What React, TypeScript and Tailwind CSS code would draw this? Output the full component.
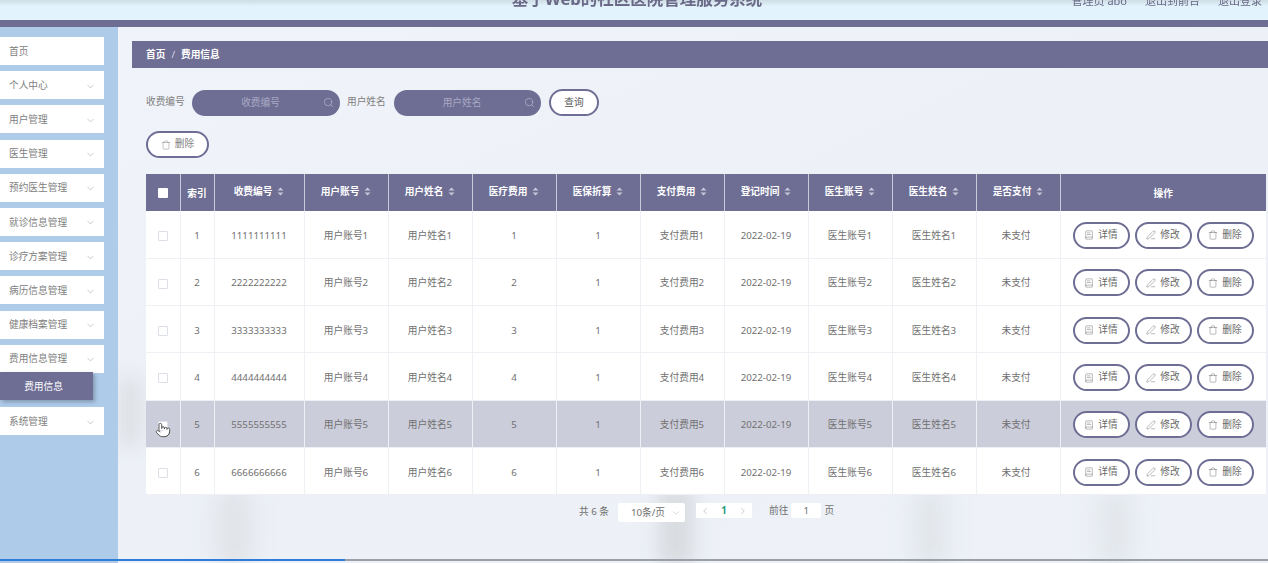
import { ChevronDown, ChevronLeft, ChevronRight, Search, Trash, PenLine, BookText, Pointer } from "lucide-react";

const menu = ["个人中心", "用户管理", "医生管理", "预约医生管理", "就诊信息管理", "诊疗方案管理", "病历信息管理", "健康档案管理", "费用信息管理"];
const heads = ["收费编号", "用户账号", "用户姓名", "医疗费用", "医保折算", "支付费用", "登记时间", "医生账号", "医生姓名", "是否支付"];
const widths = [34, 34, 90, 84, 84, 84, 84, 84, 84, 84, 84, 84, 206];
const rows = [1, 2, 3, 4, 5, 6];

function Sort() {
  return (
    <svg width="7" height="9" viewBox="0 0 7 9" className="inline-block ml-[5px] align-[-1px]">
      <path d="M3.5 0.5L6.5 3.6H0.5Z" fill="#c4c6d8" />
      <path d="M3.5 8.5L6.5 5.4H0.5Z" fill="#c4c6d8" />
    </svg>
  );
}

function Action({ icon, label }: { icon: React.ReactNode; label: string }) {
  return (
    <button className="w-[57px] h-[27px] -mt-[1px] rounded-full border-2 border-[#6e6e95] bg-white flex items-center justify-center gap-[4px] text-[9.7px] text-[#6a6a6a]">
      {icon}
      {label}
    </button>
  );
}

function MenuItem({ label, arrow = true }: { label: string; arrow?: boolean }) {
  return (
    <div className="h-[28px] w-[104px] bg-white flex items-center justify-between pl-[9px] pr-[8px] pt-[2px] text-[9.7px] text-[#808080]">
      <span>{label}</span>
      {arrow && <ChevronDown size={11} strokeWidth={1.1} color="#999" />}
    </div>
  );
}

export default function App() {
  return (
    <div className="relative w-[1268px] h-[563px] overflow-hidden flex flex-col blur-[0.4px] font-['Noto_Sans','Noto_Sans_CJK_SC',sans-serif]">
      <header className="h-[20px] shrink-0 bg-gradient-to-b from-[#cfdde3] via-[#e2f3fd] via-30% to-[#e2f3fd] flex items-start overflow-hidden relative">
        <div className="flex-1 flex justify-center pl-[6px]">
          <span className="text-[16.5px] font-bold text-[#6a6a88] leading-none -mt-[9px]">基于Web的社区医院管理服务系统</span>
        </div>
        <div className="absolute right-[6px] -top-[6px] flex gap-[18px] text-[11px] leading-[14px] text-[#6a6a88]">
          <span>管理员 abo</span>
          <span>退出到前台</span>
          <span>退出登录</span>
        </div>
      </header>
      <div className="h-[7px] shrink-0 bg-[#6e6e95]" />
      <div className="flex-1 flex min-h-0">
        <aside className="w-[118px] shrink-0 bg-[#aecbea] pt-[10px] flex flex-col">
          <div className="flex flex-col gap-[6.2px]">
            <MenuItem label="首页" arrow={false} />
            {menu.map((m) => (
              <MenuItem key={m} label={m} />
            ))}
          </div>
          <div className="h-[28px] w-[93px] bg-[#6e6e95] shadow-[2px_2px_4px_rgba(0,0,0,0.25)] text-[9.7px] text-white flex items-center justify-center pr-[6px] pt-[2px] -mt-[0.5px]">
            费用信息
          </div>
          <div className="mt-[7px]">
            <MenuItem label="系统管理" />
          </div>
        </aside>
        <main className="relative flex-1 min-w-0 pt-[14px] bg-gradient-to-br from-[#f0f3f9] via-[#edf1f7] to-[#eef2f8] overflow-hidden">
          <div className="absolute left-[98px] top-[462px] w-[36px] h-[80px] bg-[#e0e3e7] blur-[12px]" />
          <div className="absolute left-[540px] top-[460px] w-[36px] h-[80px] bg-[#d8dbdf] blur-[10px]" />
          <div className="absolute left-[795px] top-[462px] w-[34px] h-[80px] bg-[#e1e5e9] blur-[12px]" />
          <div className="absolute left-[980px] top-[462px] w-[34px] h-[80px] bg-[#e2e6ea] blur-[12px]" />
          <div className="absolute left-0 top-[350px] w-[24px] h-[70px] bg-[#dcdfe3] blur-[10px]" />
          <div className="relative pl-[14px]">
            <div className="h-[27px] bg-[#6e6e95] flex items-center pl-[14px] pt-[2px] text-[9.7px] font-bold text-white gap-[6px]">
              <span>首页</span>
              <span className="font-normal text-[#d8d8e4]">/</span>
              <span>费用信息</span>
            </div>
            <div className="pl-[14px] pr-[2px]">
              <div className="flex items-center mt-[21px] h-[27px] text-[9.7px] text-[#808080]">
                <span className="w-[46px]">收费编号</span>
                <div className="w-[148px] h-[26px] rounded-full bg-[#6e6e95] relative flex items-center justify-center text-[#a9a9c2] pr-[11px] pt-[2px]">
                  收费编号
                  <Search size={11} strokeWidth={1.1} color="#d0d0e0" className="absolute right-[6px] top-[7px]" />
                </div>
                <span className="ml-[7px] w-[47px]">用户姓名</span>
                <div className="w-[147px] h-[26px] rounded-full bg-[#6e6e95] relative flex items-center justify-center text-[#a9a9c2] pr-[11px] pt-[2px]">
                  用户姓名
                  <Search size={11} strokeWidth={1.1} color="#d0d0e0" className="absolute right-[6px] top-[7px]" />
                </div>
                <button className="ml-[8px] w-[50px] h-[27px] rounded-full border-2 border-[#6e6e95] bg-white text-[#555] text-[9.7px] pt-[1px]">查询</button>
              </div>
              <button className="mt-[15px] w-[63px] h-[27px] rounded-full border-2 border-[#6e6e95] bg-white flex items-center justify-center gap-[4px] text-[9.7px] text-[#808080]">
                <Trash size={10} strokeWidth={1.1} />
                删除
              </button>
              <table className="mt-[16px] w-[1120px] table-fixed border-collapse text-[9.7px] text-[#707070] [&_td]:pt-[3px]">
                <colgroup>
                  {widths.map((w, i) => (
                    <col key={i} width={w} />
                  ))}
                </colgroup>
                <thead>
                  <tr className="h-[37px] bg-[#6e6e95] text-white font-bold">
                    <th className="border-r border-[#c9c9d8] pt-[1px]">
                      <span className="inline-block w-[10px] h-[10px] bg-white rounded-[1px] align-middle" />
                    </th>
                    <th className="border-r border-[#c9c9d8] font-bold pt-[3px]">索引</th>
                    {heads.map((h) => (
                      <th key={h} className="border-r border-[#c9c9d8] font-bold pb-[1px]">
                        {h}
                        <Sort />
                      </th>
                    ))}
                    <th className="font-bold pt-[3px]">操作</th>
                  </tr>
                </thead>
                <tbody>
                  {rows.map((n) => (
                    <tr key={n} className={`h-[47.33px] border-b border-[#eef0f5] ${n === 5 ? "bg-[#cccdda]" : "bg-white"}`}>
                      <td className="text-center border-r border-[#eef0f5]">
                        <span className="inline-block w-[10px] h-[10px] rounded-[1px] border border-[#dcdfe6] align-middle bg-white" />
                      </td>
                      <td className="text-center border-r border-[#eef0f5]">{n}</td>
                      <td className="text-center border-r border-[#eef0f5]">{String(n).repeat(10)}</td>
                      <td className="text-center border-r border-[#eef0f5]">用户账号{n}</td>
                      <td className="text-center border-r border-[#eef0f5]">用户姓名{n}</td>
                      <td className="text-center border-r border-[#eef0f5]">{n}</td>
                      <td className="text-center border-r border-[#eef0f5]">1</td>
                      <td className="text-center border-r border-[#eef0f5]">支付费用{n}</td>
                      <td className="text-center border-r border-[#eef0f5]">2022-02-19</td>
                      <td className="text-center border-r border-[#eef0f5]">医生账号{n}</td>
                      <td className="text-center border-r border-[#eef0f5]">医生姓名{n}</td>
                      <td className="text-center border-r border-[#eef0f5] pr-[4px]">未支付</td>
                      <td>
                        <div className="flex items-center gap-[5px] pl-[12px]">
                          <Action icon={<BookText size={10} strokeWidth={1.1} />} label="详情" />
                          <Action icon={<PenLine size={10} strokeWidth={1.1} />} label="修改" />
                          <Action icon={<Trash size={10} strokeWidth={1.1} />} label="删除" />
                        </div>
                      </td>
                    </tr>
                  ))}
                </tbody>
              </table>
              <div className="flex items-start mt-[8px] ml-[433px] text-[9.7px] text-[#707070]">
                <span className="mt-[2px] w-[39px]">共 6 条</span>
                <div className="w-[67px] h-[19px] bg-white rounded-[2px] flex items-center justify-between pl-[13px] pr-[4px] pt-[1px]">
                  10条/页
                  <ChevronDown size={10} strokeWidth={1.1} color="#aaa" />
                </div>
                <div className="ml-[11px] w-[56px] h-[15px] bg-white flex items-center justify-between px-[4px]">
                  <ChevronLeft size={10} strokeWidth={1.1} color="#888" />
                  <span className="font-bold text-[#2a9d7c]">1</span>
                  <ChevronRight size={10} strokeWidth={1.1} color="#888" />
                </div>
                <span className="ml-[17px] leading-[15px]">前往</span>
                <div className="ml-[3px] w-[30px] h-[15px] bg-white rounded-[2px] flex items-center justify-center">1</div>
                <span className="ml-[3px] leading-[15px]">页</span>
              </div>
            </div>
          </div>
        </main>
      </div>
      <Pointer size={16} strokeWidth={1.2} color="#333" fill="#fff" className="absolute left-[155px] top-[422px]" />
      <div className="absolute left-0 right-0 top-[559px] h-[1.5px] bg-[#9a9fa8]">
        <div className="h-full w-[345px] bg-[#2f7bd8]" />
      </div>
    </div>
  );
}
